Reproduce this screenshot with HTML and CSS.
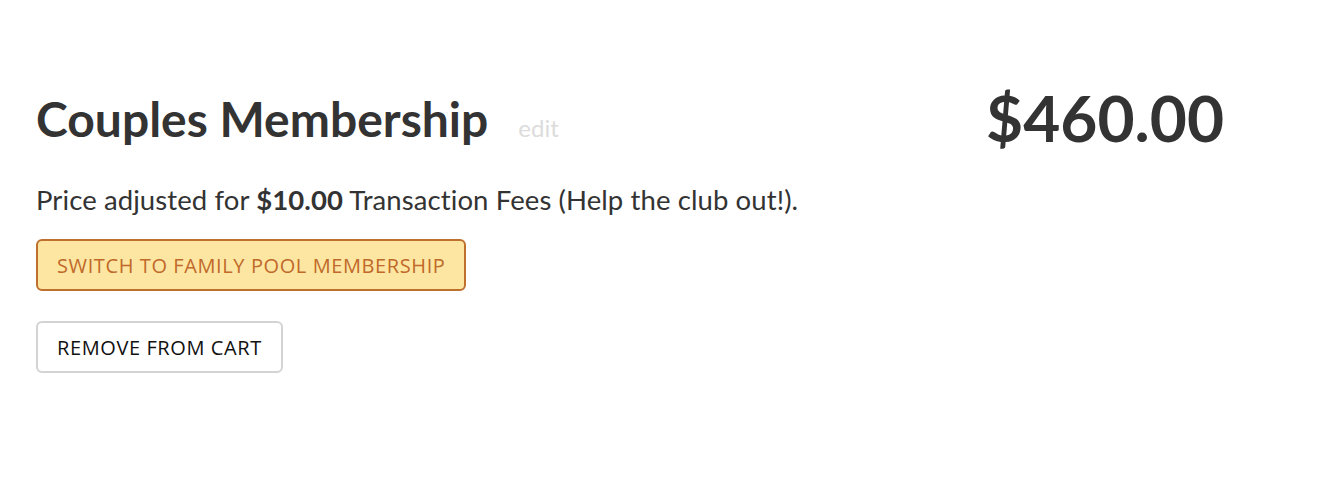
FILE: index.html
```html
<!DOCTYPE html>
<html>
<head>
<meta charset="utf-8">
<link rel="stylesheet" href="styles.css">
</head>
<body>
<div class="item">
  <div class="item-head">
    <div class="title-wrap">
      <h1 class="title">Couples Membership</h1>
      <a class="edit" href="#">edit</a>
    </div>
    <div class="price">$460.00</div>
  </div>
  <p class="note">Price adjusted for <strong>$10.00</strong> Transaction Fees (Help the club out!).</p>
  <div class="actions">
    <button class="btn btn-switch">SWITCH TO FAMILY POOL MEMBERSHIP</button>
    <button class="btn btn-remove">REMOVE FROM CART</button>
  </div>
</div>
</body>
</html>
```
FILE: styles.css
```css
html, body {
  margin: 0;
  padding: 0;
  background: #fff;
}
body {
  font-family: Lato, "Liberation Sans", sans-serif;
  color: #333;
}
.item {
  padding: 84px 36px 0 36px;
  width: 1188px;
}
.item-head {
  display: flex;
  justify-content: space-between;
  align-items: flex-start;
}
.title-wrap {
  display: flex;
  align-items: baseline;
  gap: 30px;
}
.title {
  margin: 0;
  font-size: 48px;
  font-weight: 700;
  line-height: 70px;
  color: #333;
}
.edit {
  font-size: 24px;
  color: #dcdcdc;
  text-decoration: none;
}
.price {
  margin-top: 1px;
  font-size: 64px;
  font-weight: 700;
  color: #333;
  line-height: 66px;
}
.note {
  margin: 30px 0 0 0;
  font-size: 27.5px;
  letter-spacing: 0.1px;
  line-height: 32px;
  color: #333;
}
.note strong { font-weight: 700; }
.actions {
  display: flex;
  flex-direction: column;
  align-items: flex-start;
  gap: 30px;
  margin-top: 23px;
}
.btn {
  font-family: "Open Sans", "Noto Sans", sans-serif;
  font-size: 20px;
  letter-spacing: 0.6px;
  height: 52px;
  padding: 0 19px;
  border-radius: 6px;
  cursor: pointer;
}
.btn-switch {
  background: #fde6a1;
  border: 2px solid #c0702e;
  color: #c0692a;
}
.btn-remove {
  background: #fff;
  border: 2px solid #d3d3d3;
  color: #111;
}
```
